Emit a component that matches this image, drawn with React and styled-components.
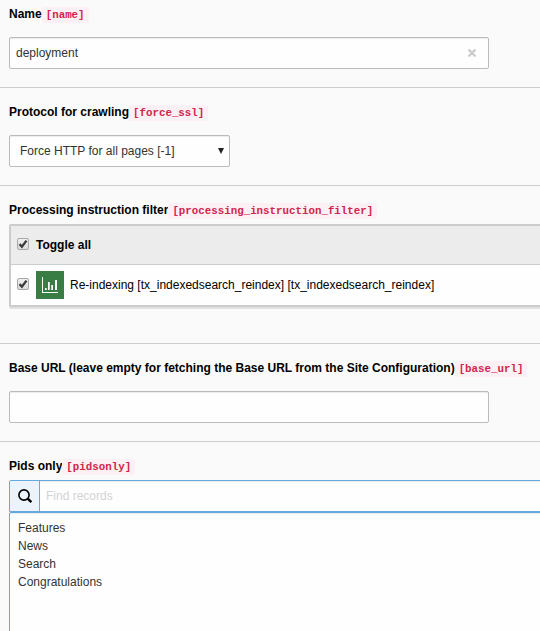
import React from 'react';
import styled, { createGlobalStyle, css } from 'styled-components';

const GlobalStyle = createGlobalStyle`
  * { box-sizing: border-box; }
  html, body { margin: 0; overflow: hidden; background: #fafafa; }
  body {
    font: 12px/18px "Liberation Sans", Arial, sans-serif;
    color: #000;
  }
`;

const Form = styled.main`
  height: 631px;
  overflow: hidden;
`;

const Section = styled.section`
  padding: ${(p) => (p.$first ? 5 : 15)}px 0 ${(p) => p.$bottom ?? 18}px 9px;
  border-bottom: 1px solid #cdcdcd;
`;

const Label = styled.div`
  height: 18px;
  margin-bottom: ${(p) => p.$gap ?? 14}px;
  font-weight: bold;
  white-space: nowrap;
`;

const Code = styled.code`
  padding: 2px 4px;
  border-radius: 2px;
  background: #fbf1f4;
  color: #d3234f;
  font: bold 10.8px "Liberation Mono", monospace;
`;

const control = css`
  display: flex;
  align-items: center;
  height: 32px;
  border: 1px solid #bbb;
  border-radius: 2px;
  background: #fefefe;
  color: #333;
  box-shadow: inset 0 1px 1px rgba(0, 0, 0, 0.075);
`;

const TextField = styled.div`
  ${control}
  justify-content: space-between;
  width: 480px;
  padding: 0 11px 0 6px;
`;

const SelectField = styled.div`
  ${control}
  justify-content: space-between;
  width: 221px;
  padding: 0 5px 0 10px;
`;

const Table = styled.div`
  width: 560px;
  border: 2px solid #ccc;
  border-radius: 2px;
  background: #fefefe;
  box-shadow: 0 2px 0 #e0e0e0;
`;

const Row = styled.div`
  display: flex;
  align-items: center;
  height: ${(p) => (p.$head ? 39 : 40)}px;
  padding-left: 6px;
  background: ${(p) => (p.$head ? '#ececec' : '#fefefe')};
  border-bottom: ${(p) => (p.$head ? '1px solid #ccc' : '0')};
  font-weight: ${(p) => (p.$head ? 'bold' : 'normal')};
`;

const CheckIcon = styled.svg`
  flex: none;
  width: 13px;
  height: 13px;
  margin: 0 6px 1px 0;
`;

const RecordIcon = styled.svg`
  flex: none;
  width: 28px;
  height: 28px;
  margin-right: 6px;
`;

const SearchGroup = styled.div`
  display: flex;
  width: 560px;
  height: 32px;
  border: 1px solid #63aadf;
  border-radius: 2px 0 0 0;
  background: #fefefe;
`;

const SearchAddon = styled.div`
  display: flex;
  align-items: center;
  justify-content: center;
  width: 30px;
  border-right: 1px solid #63aadf;
  background: #ebf3fc;
`;

const SearchInput = styled.div`
  flex: 1;
  padding: 6px;
  color: #d4d4d4;
  box-shadow: inset 0 1px 1px rgba(0, 0, 0, 0.075);
`;

const RecordList = styled.ul`
  width: 560px;
  height: 140px;
  margin: 0;
  padding: 6px 8px;
  list-style: none;
  border: 1px solid #63aadf;
  border-radius: 2px 0 0 0;
  background: #fefefe;
  color: #333;
  box-shadow: inset 0 1px 1px rgba(0, 0, 0, 0.075);
`;

const Checkbox = () => (
  <CheckIcon viewBox="0 0 13 13">
    <defs>
      <linearGradient id="box" x1="0" y1="0" x2="0" y2="1">
        <stop offset="0" stopColor="#f0f0f0" />
        <stop offset="1" stopColor="#dcdcdc" />
      </linearGradient>
    </defs>
    <rect x="0.5" y="0.5" width="11" height="11" rx="1.5" fill="url(#box)" stroke="#a8a8a8" />
    <path d="M2.500 6.100 4.900 8.700 9.500 2.600" fill="none" stroke="#3c3c3c" strokeWidth="2.4" />
  </CheckIcon>
);

const ChartIcon = () => (
  <RecordIcon viewBox="0 0 28 28">
    <path fill="#3a7d44" d="M0 0h28v28H0z" />
    <path fill="#fff" d="M6 6h1v15h15v1H6zM9 17h1.700v2H9zM12 11h1.700v8h-1.700zM15.300 14h1.700v5h-1.700zM19 9h2v10h-2z" />
  </RecordIcon>
);

const ClearIcon = () => (
  <svg width="10" height="10" viewBox="0 0 10 10">
    <path d="M1.500 1.500 8.500 8.500M8.500 1.500 1.500 8.500" stroke="#ccc" strokeWidth="2.4" />
  </svg>
);

const ArrowIcon = () => (
  <svg width="6" height="6" viewBox="0 0 6 6">
    <path d="M0 0h6L3 6z" fill="#222" />
  </svg>
);

const SearchIcon = () => (
  <svg width="16" height="16" viewBox="0 0 16 16" fill="none" stroke="#000">
    <circle cx="7" cy="7" r="5.100" strokeWidth="1.600" />
    <path d="m10.700 10.700 3.700 3.500" strokeWidth="2.400" />
  </svg>
);

const records = ['Features', 'News', 'Search', 'Congratulations'];

export default function App() {
  return (
    <Form>
      <GlobalStyle />
      <Section $first>
        <Label>Name<Code>[name]</Code></Label>
        <TextField>deployment<ClearIcon /></TextField>
      </Section>
      <Section>
        <Label>Protocol for crawling<Code>[force_ssl]</Code></Label>
        <SelectField>Force HTTP for all pages [-1]<ArrowIcon /></SelectField>
      </Section>
      <Section $bottom={36}>
        <Label $gap={5}>Processing instruction filter<Code>[processing_instruction_filter]</Code></Label>
        <Table>
          <Row $head><Checkbox />Toggle all</Row>
          <Row>
            <Checkbox />
            <ChartIcon />
            Re-indexing [tx_indexedsearch_reindex] [tx_indexedsearch_reindex]
          </Row>
        </Table>
      </Section>
      <Section>
        <Label>Base URL (leave empty for fetching the Base URL from the Site Configuration)<Code>[base_url]</Code></Label>
        <TextField />
      </Section>
      <Section>
        <Label $gap={5}>Pids only<Code>[pidsonly]</Code></Label>
        <SearchGroup>
          <SearchAddon><SearchIcon /></SearchAddon>
          <SearchInput>Find records</SearchInput>
        </SearchGroup>
        <RecordList>
          {records.map((name) => <li key={name}>{name}</li>)}
        </RecordList>
      </Section>
    </Form>
  );
}
